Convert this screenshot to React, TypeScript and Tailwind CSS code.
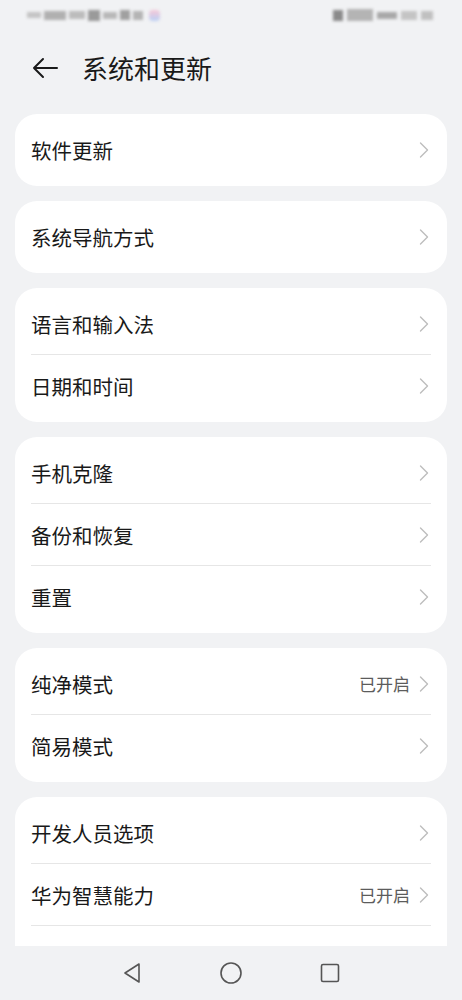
import React from 'react'

type Item = { label: string; value?: string }

const groups: Item[][] = [
  [{ label: '软件更新' }],
  [{ label: '系统导航方式' }],
  [{ label: '语言和输入法' }, { label: '日期和时间' }],
  [{ label: '手机克隆' }, { label: '备份和恢复' }, { label: '重置' }],
  [{ label: '纯净模式', value: '已开启' }, { label: '简易模式' }],
  // third row sits under the nav bar in the screenshot, nothing of it shows
  [{ label: '开发人员选项' }, { label: '华为智慧能力', value: '已开启' }, { label: '' }],
]

function Chevron() {
  return (
    <svg width="10" height="16" viewBox="0 0 10 16" fill="none" className="shrink-0">
      <path d="M1.5 1L8.5 8L1.5 15" stroke="#bdbdbd" strokeWidth="1.4" strokeLinecap="round" strokeLinejoin="round" />
    </svg>
  )
}

function Row({ item, last }: { item: Item; last: boolean }) {
  return (
    <div className="mx-4 h-[62px] flex items-center justify-between relative">
      <span className="text-[20.5px] text-[#191919]">{item.label}</span>
      <div className="flex items-center gap-[9px] pr-[2px]">
        {item.value && <span className="text-[17px] text-[#5c5c5c]">{item.value}</span>}
        {item.label && <Chevron />}
      </div>
      {!last && <div className="absolute left-0 right-0 bottom-0 h-px bg-[#e6e6e6]" />}
    </div>
  )
}

function StatusBar() {
  return (
    <div className="h-[30px] flex items-center justify-between px-[27px] blur-[1.5px]">
      <div className="flex items-center gap-[3px]">
        <div className="w-[14px] h-[6px] bg-[#c4c4c4]" />
        <div className="w-[22px] h-[9px] bg-[#b0b0b0]" />
        <div className="w-[16px] h-[8px] bg-[#bcbcbc]" />
        <div className="w-[12px] h-[11px] bg-[#9a9a9a]" />
        <div className="w-[14px] h-[7px] bg-[#b8b8b8]" />
        <div className="w-[10px] h-[10px] bg-[#a0a0a0]" />
        <div className="w-[10px] h-[9px] bg-[#b4b4b4]" />
        <div className="ml-[3px] w-[11px] h-[11px] rounded-sm bg-gradient-to-b from-[#f5c6d6] to-[#b8d0f5]" />
      </div>
      <div className="flex items-center gap-[4px] pr-[2px]">
        <div className="w-[10px] h-[11px] bg-[#8a8a8a]" />
        <div className="w-[26px] h-[12px] bg-[#b4b4b4]" />
        <div className="w-[20px] h-[7px] bg-[#a8a8a8]" />
        <div className="w-[16px] h-[9px] bg-[#c4c4c4]" />
        <div className="w-[12px] h-[9px] bg-[#c0c0c0]" />
      </div>
    </div>
  )
}

export default function App() {
  return (
    <div
      className="w-[462px] h-[1000px] bg-[#f1f2f4] flex flex-col overflow-hidden"
      style={{ fontFamily: '"Noto Sans CJK SC", "Noto Sans", sans-serif' }}
    >
      <StatusBar />

      <div className="h-[78px] flex items-center pl-[31px] pb-[2px]">
        <svg width="28" height="22" viewBox="0 0 28 22" fill="none">
          <path d="M26 11H3M12 2L3 11L12 20" stroke="#1a1a1a" strokeWidth="2" strokeLinecap="round" strokeLinejoin="round" />
        </svg>
        <h1 className="ml-[23px] text-[26px] font-normal text-[#191919] leading-none">系统和更新</h1>
      </div>

      <div className="flex-1 overflow-hidden px-[15px] pt-[6px] flex flex-col gap-[15px]">
        {groups.map((g, i) => (
          <div key={i} className="bg-white rounded-[22px] py-[5px] shrink-0">
            {g.map((item, j) => (
              <Row key={j} item={item} last={j === g.length - 1} />
            ))}
          </div>
        ))}
      </div>

      <div className="h-[54px] shrink-0 bg-[#f1f2f4] flex items-center justify-center gap-[77px]">
        <svg width="20" height="22" viewBox="0 0 20 22" fill="none">
          <path d="M17 2L3 11L17 20Z" stroke="#555" strokeWidth="1.6" strokeLinejoin="round" />
        </svg>
        <svg width="24" height="24" viewBox="0 0 24 24" fill="none">
          <circle cx="12" cy="12" r="10" stroke="#555" strokeWidth="1.6" />
        </svg>
        <svg width="20" height="20" viewBox="0 0 20 20" fill="none">
          <rect x="1.5" y="1.5" width="17" height="17" rx="1.5" stroke="#555" strokeWidth="1.6" />
        </svg>
      </div>
    </div>
  )
}
